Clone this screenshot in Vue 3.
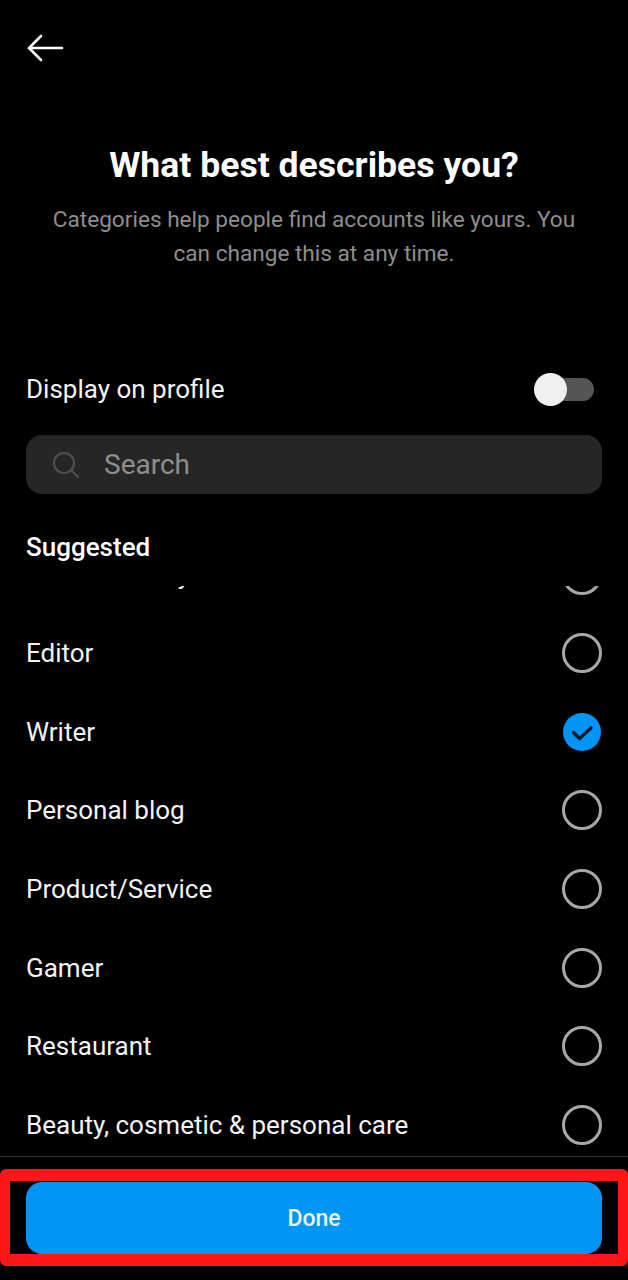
<template>
  <div class="screen">
    <header class="top">
      <svg class="back" width="38" height="30" viewBox="0 0 38 30" fill="none">
        <path d="M36 15H3M15 3L3 15l12 12" stroke="#fff" stroke-width="2.6" stroke-linejoin="miter" stroke-linecap="round" />
      </svg>
    </header>

    <section class="intro">
      <h1 class="intro__title">What best describes you?</h1>
      <p class="intro__text">Categories help people find accounts like yours. You can change this at any time.</p>
    </section>

    <div class="display">
      <span>Display on profile</span>
      <div class="toggle"><div class="toggle__knob"></div></div>
    </div>

    <div class="search">
      <svg width="28" height="28" viewBox="0 0 28 28" fill="none">
        <circle cx="12" cy="12" r="10" stroke="#4f4f4f" stroke-width="2.2" />
        <path d="M19.5 19.5L26 26" stroke="#4f4f4f" stroke-width="2.2" stroke-linecap="round" />
      </svg>
      <span>Search</span>
    </div>

    <h2 class="suggested">Suggested</h2>

    <div class="list">
      <div class="list__inner">
        <div v-for="item in items" :key="item" class="row">
          <span>{{ item }}</span>
          <svg v-if="item === selected" class="radio" width="40" height="40" viewBox="0 0 40 40" fill="none">
            <circle cx="20" cy="20" r="19" fill="#0095f6" />
            <path d="M11.5 20.5l6 6 11.5-10.5" stroke="#0b1a2a" stroke-width="3.4" stroke-linecap="round" stroke-linejoin="round" />
          </svg>
          <div v-else class="radio radio--empty"></div>
        </div>
      </div>
    </div>

    <footer class="footer">
      <button class="done">Done</button>
      <div class="highlight"></div>
    </footer>
  </div>
</template>

<script setup>
const selected = 'Writer'

const items = [
  'Health/beauty',
  'Editor',
  'Writer',
  'Personal blog',
  'Product/Service',
  'Gamer',
  'Restaurant',
  'Beauty, cosmetic & personal care',
]
</script>

<style>
html,
body {
  background: #000;
}
</style>

<style scoped>
.screen {
  width: 628px;
  height: 1280px;
  background: #000;
  color: #fff;
  font-family: Roboto, "Liberation Sans", sans-serif;
  overflow: hidden;
}

.top {
  height: 64px;
  padding: 33px 0 0 26px;
  box-sizing: border-box;
}

.back {
  display: block;
}

.intro {
  margin-top: 78px;
  padding: 0 40px;
  text-align: center;
}

.intro__title {
  margin: 0;
  font-size: 35.6px;
  line-height: 46px;
  font-weight: 700;
}

.intro__text {
  margin: 15px 0 0;
  font-size: 22.6px;
  line-height: 34px;
  color: #8e8e8e;
}

.display {
  margin-top: 98px;
  padding: 0 34px 0 26px;
  height: 40px;
  display: flex;
  align-items: center;
  justify-content: space-between;
  font-size: 26px;
  color: #f4f4f4;
}

.toggle {
  position: relative;
  width: 60px;
  height: 23px;
  border-radius: 12px;
  background: #555;
}

.toggle__knob {
  position: absolute;
  left: 0;
  top: -5px;
  width: 33px;
  height: 33px;
  border-radius: 50%;
  background: #efefef;
}

.search {
  margin: 26px 26px 0;
  height: 59px;
  border-radius: 16px;
  background: #262626;
  padding-left: 26px;
  display: flex;
  align-items: center;
  gap: 24px;
  font-size: 28px;
  color: #8e8e8e;
}

.suggested {
  margin: 35px 26px 0;
  font-size: 26px;
  line-height: 36px;
  font-weight: 500;
}

.list {
  margin-top: 21px;
  height: 570px;
  overflow: hidden;
}

.list__inner {
  margin-top: -50.6px;
}

.row {
  height: 78.6px;
  padding: 0 26px;
  display: flex;
  align-items: center;
  justify-content: space-between;
  font-size: 26px;
  color: #f4f4f4;
}

.radio {
  width: 40px;
  height: 40px;
  box-sizing: border-box;
  flex: none;
}

.radio--empty {
  border: 3px solid #a8a8a8;
  border-radius: 50%;
}

.footer {
  position: relative;
  height: 125px;
  border-top: 1px solid #363636;
  padding: 25px 26px 0;
  box-sizing: border-box;
}

.done {
  display: block;
  width: 100%;
  height: 72px;
  border: none;
  border-radius: 16px;
  background: #0095f6;
  color: #eaf6ff;
  font-family: inherit;
  font-size: 23px;
  font-weight: 500;
}

/* red marker box lying over the footer */
.highlight {
  position: absolute;
  left: 0;
  right: 0;
  top: 12px;
  height: 97px;
  box-sizing: border-box;
  border: solid #ff1616;
  border-width: 12px 10px;
  border-radius: 6px;
}
</style>
